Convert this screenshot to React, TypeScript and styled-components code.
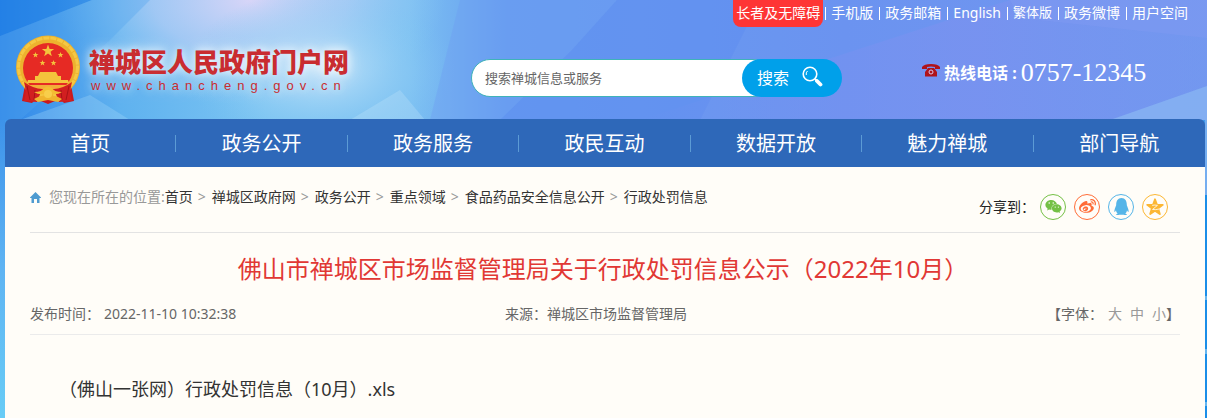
import React from 'react';
import styled, { createGlobalStyle } from 'styled-components';
import { FaWeixin, FaWeibo, FaQq } from 'react-icons/fa';

const GlobalStyle = createGlobalStyle`
  *, *::before, *::after { box-sizing: border-box; }
  body {
    margin: 0;
    font: 14px/20px "Noto Sans", "Noto Sans CJK SC", sans-serif;
    color: #333;
  }
  a { color: inherit; text-decoration: none; }
  ul, ol { list-style: none; margin: 0; padding: 0; }
`;

const Page = styled.div`
  position: relative;
  min-height: 100vh;
  display: flex;
  flex-direction: column;
  padding: 0 2px 0 5px;
  background: linear-gradient(#2f86e8, #66c8f6);
  overflow: hidden;
`;

const BackdropSvg = styled.svg`
  position: absolute;
  top: 0;
  left: 0;
  width: 100%;
  height: 418px;
`;

const Header = styled.header`
  position: relative;
`;

const TopLinks = styled.ul`
  display: flex;
  justify-content: flex-end;
  gap: 5px;
  padding-right: 17px;
  height: 27px;
  line-height: 25px;
  color: #fff;
`;

const TopItem = styled.li`
  display: flex;
  gap: 6px;
  &:not(:last-child)::after {
    content: "";
    width: 1px;
    height: 13px;
    margin-top: 7px;
    background: #fff;
  }
  &:first-child { gap: 2px; }
`;

const TopLink = styled.a<{ $badge?: boolean; $small?: boolean }>`
  font-size: ${(p) => (p.$small ? 13 : 14)}px;
  ${(p) => p.$badge && 'padding: 0 3px; background: #fe3535; border-radius: 0 0 8px 8px;'}
`;

const HeaderRow = styled.div`
  display: grid;
  grid-template-columns: 466fr 451fr 283fr;
  align-items: center;
  height: 92px;
`;

const Brand = styled.a`
  display: flex;
  align-items: center;
  gap: 8px;
  padding: 0 0 6px 10px;
`;

const BrandText = styled.span`
  display: flex;
  flex-direction: column;
  color: #c92c30;
  text-shadow: 0 0 8px rgba(255, 255, 255, 0.8), 0 0 16px rgba(255, 255, 255, 0.8);
  white-space: nowrap;
`;

const BrandName = styled.span`
  font: 900 26px/32px "Noto Sans CJK SC", sans-serif;
`;

const BrandUrl = styled.span`
  padding-left: 2px;
  font: 13px/18px "Liberation Sans", sans-serif;
  letter-spacing: 6px;
`;

const SearchForm = styled.form`
  display: flex;
  width: 371px;
  height: 38px;
  margin-top: 10px;
`;

const SearchInput = styled.input`
  flex: 1;
  min-width: 0;
  margin-right: -30px;
  padding: 0 40px 0 13px;
  border: 1px solid #3fb3b8;
  border-radius: 19px;
  background: #fff;
  font: 13px "Noto Sans", "Noto Sans CJK SC", sans-serif;
  outline: none;
  &::placeholder { color: #666; opacity: 1; }
`;

const SearchButton = styled.button`
  position: relative;
  display: flex;
  align-items: center;
  gap: 13px;
  width: 100px;
  padding: 0 0 0 15px;
  border: 0;
  border-radius: 19px;
  background: #00a0ea;
  color: #fff;
  font: 16px/24px "Noto Sans", "Noto Sans CJK SC", sans-serif;
  svg { margin-bottom: 4px; }
`;

const Hotline = styled.p`
  display: flex;
  align-items: center;
  gap: 4px;
  margin: 0;
  color: #fff;
  white-space: nowrap;
  svg { margin-bottom: 6px; }
`;

const HotlineLabel = styled.strong`
  font-size: 16px;
`;

const HotlineNumber = styled.span`
  font: 26px/28px "Liberation Serif", serif;
`;

const Nav = styled.nav`
  position: relative;
  background: #2e68b9;
  border-radius: 6px 6px 0 0;
`;

const NavList = styled.ul`
  display: grid;
  grid-template-columns: repeat(7, 1fr);
`;

const NavItem = styled.li`
  display: flex;
  align-items: center;
  height: 48px;
  &:not(:last-child)::after {
    content: "";
    width: 1px;
    height: 17px;
    background: #5c9bd5;
  }
`;

const NavLink = styled.a`
  flex: 1;
  padding-top: 2px;
  text-align: center;
  color: #fff;
  font-size: 20px;
  line-height: 46px;
`;

const Content = styled.main`
  position: relative;
  flex: 1;
  padding: 0 25px 16px;
  background: #fffdf8;
`;

const CrumbBar = styled.div`
  display: flex;
  justify-content: space-between;
  height: 66px;
  border-bottom: 1px solid #e3e3e3;
`;

const Crumbs = styled.nav`
  display: flex;
  align-items: center;
  height: 60px;
  color: #999;
  svg { margin-right: 8px; }
`;

const CrumbList = styled.ol`
  display: flex;
`;

const Crumb = styled.li`
  a { color: #333; }
  &:not(:last-child)::after { content: ">"; margin: 0 6px 0 5px; }
`;

const Share = styled.div`
  display: flex;
  align-items: center;
  gap: 8px;
  padding: 14px 12px 0 0;
  color: #222;
`;

const ShareLabel = styled.span`
  margin-right: -3px;
`;

const ShareLink = styled.a<{ $color: string }>`
  display: flex;
  align-items: center;
  justify-content: center;
  width: 26px;
  height: 26px;
  border: 1px solid ${(p) => p.$color};
  border-radius: 50%;
  color: ${(p) => p.$color};
`;

const Title = styled.h1`
  margin: 18px 0 0;
  padding-right: 4px;
  color: #e13834;
  font-size: 24px;
  font-weight: 400;
  line-height: 36px;
  text-align: center;
`;

const Meta = styled.div`
  display: grid;
  grid-template-columns: 475fr 400fr 275fr;
  margin-top: 17px;
  padding-bottom: 10px;
  border-bottom: 1px solid #ebebeb;
  color: #666;
`;

const Published = styled.span`
  display: flex;
  gap: 4px;
`;

const FontSizer = styled.div`
  display: flex;
  justify-content: flex-end;
`;

const SizeOptions = styled.span`
  display: flex;
  gap: 8px;
  margin-left: 5px;
`;

const SizeButton = styled.button`
  padding: 0;
  border: 0;
  background: none;
  color: #999;
  font: inherit;
`;

const Attachment = styled.p`
  margin: 40px 0 0;
  padding-left: 29px;
  font-size: 18px;
  line-height: 28px;
`;

const Backdrop = () => (
  <BackdropSvg viewBox="0 0 1207 418" preserveAspectRatio="none" aria-hidden="true">
    <defs>
      <linearGradient id="base" x1="0" x2="1">
        <stop offset="0" stopColor="#2f86e8" />
        <stop offset="0.1" stopColor="#5fb2ef" />
        <stop offset="0.22" stopColor="#7cc4f2" />
        <stop offset="0.34" stopColor="#7cc0f2" />
        <stop offset="0.42" stopColor="#669df0" />
        <stop offset="0.7" stopColor="#6b93f0" />
        <stop offset="1" stopColor="#7397ef" />
      </linearGradient>
      <radialGradient id="glow">
        <stop offset="0" stopColor="#dcd6f8" stopOpacity="0.95" />
        <stop offset="0.5" stopColor="#b9cff6" stopOpacity="0.7" />
        <stop offset="1" stopColor="#8ecdf4" stopOpacity="0" />
      </radialGradient>
      <radialGradient id="cyan">
        <stop offset="0" stopColor="#cbe6fa" stopOpacity="0.95" />
        <stop offset="1" stopColor="#7cc6f2" stopOpacity="0" />
      </radialGradient>
      <linearGradient id="violet" x1="0" x2="1">
        <stop offset="0" stopColor="#7b90f0" stopOpacity="0" />
        <stop offset="0.6" stopColor="#7a92f0" stopOpacity="0.75" />
        <stop offset="1" stopColor="#7398f0" stopOpacity="0.5" />
      </linearGradient>
      <linearGradient id="leftEdge" x2="0" y2="1">
        <stop offset="0" stopColor="#3d93ea" />
        <stop offset="0.5" stopColor="#5fb4f3" />
        <stop offset="1" stopColor="#68ccf6" />
      </linearGradient>
    </defs>
    <path d="M0 0H1207V120H0Z" fill="url(#base)" />
    <ellipse cx="250" cy="0" rx="195" ry="105" fill="url(#glow)" />
    <ellipse cx="320" cy="70" rx="135" ry="80" fill="url(#cyan)" />
    <path d="M0 0H92L0 36Z" fill="#1d7de4" opacity="0.6" />
    <path d="M92 0L0 36V120H20L110 40L150 0Z" fill="#4fa2ee" opacity="0.35" />
    <path d="M90 95L130 120H20Z" fill="#a9dcf8" opacity="0.3" />
    <path d="M350 120L400 90L425 120Z" fill="#cfeafb" opacity="0.25" />
    <path d="M460 0H617L572 50L500 120H430Z" fill="#6d9df2" opacity="0.4" />
    <path d="M617 0H760L700 120H500L572 50Z" fill="#5e8cef" opacity="0.45" />
    <path d="M640 120L1010 0H1207V120Z" fill="url(#violet)" />
    <path d="M1010 0H1207V38L1020 18Z" fill="#819af2" opacity="0.4" />
    <path d="M1110 120L1207 86V120Z" fill="#88b5f3" opacity="0.75" />
    <path d="M0 120H5V418H0Z" fill="url(#leftEdge)" />
    <path d="M1205 120H1207V195H1205Z" fill="#75aef0" />
    <path d="M1205 195H1207V418H1205Z" fill="#1b8ee8" />
    <path d="M1205 296H1207V300H1205ZM1205 349H1207V354H1205ZM1205 402H1207V406H1205Z" fill="#66b5ee" />
  </BackdropSvg>
);

const STAR = 'M0 -10L2.5 -3.2L9.5 -3.1L3.9 1.2L5.9 8.1L0 4L-5.9 8.1L-3.9 1.2L-9.5 -3.1L-2.5 -3.2Z';

const Emblem = () => (
  <svg width="66" height="70" viewBox="0 0 66 70" role="img" aria-label="国徽">
    <path d="M10 50L7 66L17 68L21 64L33 69L45 64L49 68L59 66L56 50Z" fill="#c9191d" />
    <ellipse cx="33" cy="32" rx="32" ry="31.5" fill="#edb22e" />
    <ellipse cx="33" cy="32" rx="29.5" ry="29" fill="none" stroke="#f5c843" strokeWidth="3" strokeDasharray="6 1" />
    <circle cx="33" cy="33" r="25" fill="#e62a24" />
    <g fill="#f4c43c">
      <path d={STAR} transform="translate(33 16) scale(.65)" />
      <path d={STAR} transform="translate(20.500 20) scale(.31)" />
      <path d={STAR} transform="translate(45.500 20) scale(.31)" />
      <path d={STAR} transform="translate(27.500 28) scale(.31)" />
      <path d={STAR} transform="translate(38.500 28) scale(.31)" />
      <path d="M25 37H41L43 41H46V45H53L54 48H12L13 45H20V41H23Z" />
      <path d="M12 50H54L51 54H15Z" opacity="0.85" />
    </g>
    <path d="M9 47Q19 54 27 54L22 67L9 66Q12 57 9 47ZM57 47Q47 54 39 54L44 67L57 66Q54 57 57 47Z" fill="#d21f20" />
    <path d="M12 51L15 65M54 51L51 65M20 55L19 65M46 55L47 65" stroke="#a91316" fill="none" />
    <path d="M19 57Q27 57 29 53Q33 50 37 53Q39 57 47 57Q41 61 33 58Q25 61 19 57Z" fill="#f4bd32" />
    <path d="M19 64Q26 59 33 61Q40 59 47 64L43 67L33 65L23 67Z" fill="#f0b42e" />
    <circle cx="33" cy="59" r="4" fill="#f8ce4a" />
  </svg>
);

const SearchIcon = () => (
  <svg width="21" height="21" viewBox="0 0 21 21" aria-hidden="true">
    <circle cx="8" cy="8" r="6.800" fill="none" stroke="#fff" strokeWidth="1.600" />
    <path d="M4.300 9A4 4 0 0 1 5.500 5" fill="none" stroke="#fff" />
    <path d="M13 13L15 15" stroke="#fff" strokeWidth="2" />
    <path d="M15 15L18.500 18.500" stroke="#fff" strokeWidth="3.800" strokeLinecap="round" />
  </svg>
);

const PhoneIcon = () => (
  <svg width="18" height="13" viewBox="0 0 18 13" aria-hidden="true">
    <path d="M0 5V3Q2 0 9 0T18 3V5H13V3Q9 2 5 3V5Z" fill="#b01319" />
    <path d="M6 4H12L15 8V12.500H3V8Z" fill="#b01319" />
    <circle cx="9" cy="8" r="2" fill="#b01319" stroke="#d9c5ee" strokeWidth="1" />
  </svg>
);

const HomeIcon = () => (
  <svg width="11" height="11" viewBox="0 0 11 11" aria-hidden="true">
    <path d="M5.500 0L11 5.500V6H9.500V11H7V7H4V11H1.500V6H0V5.500Z" fill="#4f9bd0" />
  </svg>
);

const QzoneIcon = () => (
  <svg width="18" height="18" viewBox="-11 -11.500 22 22" aria-hidden="true">
    <path d={STAR} fill="currentColor" strokeLinejoin="round" stroke="currentColor" strokeWidth="2.200" />
    <path d="M-3.500 -2.500Q0 -3.200 3 -2.500L-3 2.500Q0 3.200 5 2" fill="none" stroke="#fffdf8" strokeWidth="1" />
  </svg>
);

const topLinks = [
  { text: '长者及无障碍', badge: true },
  { text: '手机版' },
  { text: '政务邮箱' },
  { text: 'English' },
  { text: '繁体版', small: true },
  { text: '政务微博' },
  { text: '用户空间' },
];
const navItems = ['首页', '政务公开', '政务服务', '政民互动', '数据开放', '魅力禅城', '部门导航'];
const crumbs = ['首页', '禅城区政府网', '政务公开', '重点领域', '食品药品安全信息公开', '行政处罚信息'];
const shares = [
  { name: '微信', color: '#74c045', icon: <FaWeixin size={17} /> },
  { name: '微博', color: '#ff6d38', icon: <FaWeibo size={17} /> },
  { name: 'QQ', color: '#55b5e8', icon: <FaQq size={17} /> },
  { name: 'QQ空间', color: '#fcb733', icon: <QzoneIcon /> },
];

export default function App() {
  return (
    <Page>
      <GlobalStyle />
      <Backdrop />
      <Header>
        <TopLinks>
          {topLinks.map((l) => (
            <TopItem key={l.text}>
              <TopLink href="#" $badge={l.badge} $small={l.small}>{l.text}</TopLink>
            </TopItem>
          ))}
        </TopLinks>
        <HeaderRow>
          <Brand href="#">
            <Emblem />
            <BrandText>
              <BrandName>禅城区人民政府门户网</BrandName>
              <BrandUrl>www.chancheng.gov.cn</BrandUrl>
            </BrandText>
          </Brand>
          <SearchForm role="search" onSubmit={(e) => e.preventDefault()}>
            <SearchInput type="text" placeholder="搜索禅城信息或服务" aria-label="搜索禅城信息或服务" />
            <SearchButton type="submit">搜索<SearchIcon /></SearchButton>
          </SearchForm>
          <Hotline>
            <PhoneIcon />
            <HotlineLabel>热线电话 :</HotlineLabel>
            <HotlineNumber>0757-12345</HotlineNumber>
          </Hotline>
        </HeaderRow>
      </Header>
      <Nav>
        <NavList>
          {navItems.map((n) => (
            <NavItem key={n}><NavLink href="#">{n}</NavLink></NavItem>
          ))}
        </NavList>
      </Nav>
      <Content>
        <CrumbBar>
          <Crumbs>
            <HomeIcon />
            <span>您现在所在的位置:</span>
            <CrumbList>
              {crumbs.map((c) => <Crumb key={c}><a href="#">{c}</a></Crumb>)}
            </CrumbList>
          </Crumbs>
          <Share>
            <ShareLabel>分享到：</ShareLabel>
            {shares.map((s) => (
              <ShareLink key={s.name} href="#" aria-label={s.name} $color={s.color}>{s.icon}</ShareLink>
            ))}
          </Share>
        </CrumbBar>
        <Title>佛山市禅城区市场监督管理局关于行政处罚信息公示（2022年10月）</Title>
        <Meta>
          <Published><span>发布时间：</span><time>2022-11-10 10:32:38</time></Published>
          <span>来源：禅城区市场监督管理局</span>
          <FontSizer>
            <span>【字体：</span>
            <SizeOptions>
              <SizeButton type="button">大</SizeButton>
              <SizeButton type="button">中</SizeButton>
              <SizeButton type="button">小</SizeButton>
            </SizeOptions>
            <span>】</span>
          </FontSizer>
        </Meta>
        <Attachment><a href="#">（佛山一张网）行政处罚信息（10月）.xls</a></Attachment>
      </Content>
    </Page>
  );
}
